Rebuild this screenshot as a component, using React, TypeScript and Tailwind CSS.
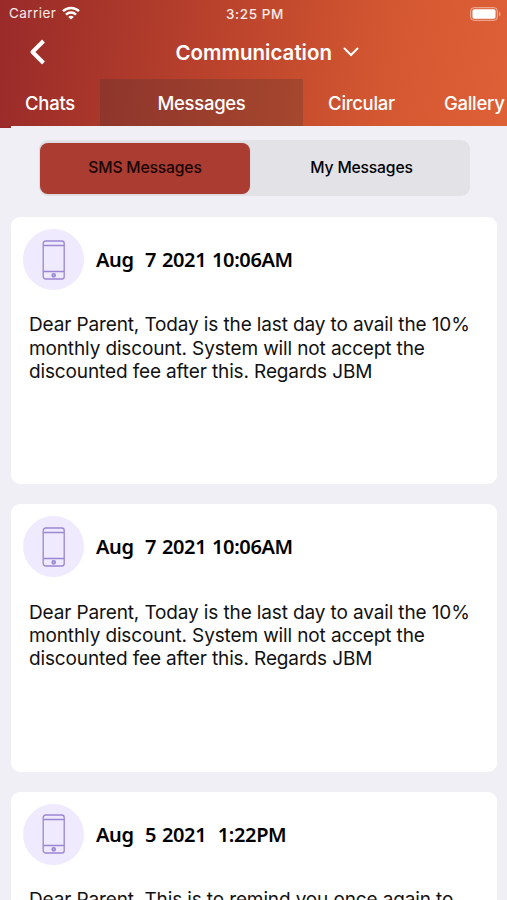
const messages = [
  {
    date: 'Aug  7 2021 10:06AM',
    lines: [
      'Dear Parent, Today is the last day to avail the 10%',
      'monthly discount. System will not accept the',
      'discounted fee after this. Regards JBM',
    ],
  },
  {
    date: 'Aug  7 2021 10:06AM',
    lines: [
      'Dear Parent, Today is the last day to avail the 10%',
      'monthly discount. System will not accept the',
      'discounted fee after this. Regards JBM',
    ],
  },
  {
    date: 'Aug  5 2021  1:22PM',
    lines: ['Dear Parent, This is to remind you once again to'],
  },
];

function StatusBar() {
  return (
    <div className="flex h-[27px] items-center pl-[9px] pr-[6px] text-[13.5px] text-white/90">
      <div className="flex flex-1 items-center gap-[6px]">
        <span className="tracking-[0.45px]">Carrier</span>
        <svg className="mb-px" width="18" height="14" viewBox="0 0 18 14" fill="none" stroke="white" strokeWidth="2.5">
          <path d="M1 5.1a11.6 11.6 0 0 1 16 0" />
          <path d="M4 8.6a7.2 7.2 0 0 1 10 0" />
          <path d="M9 13.6 6.2 10.9a4.2 4.2 0 0 1 5.6 0Z" fill="white" stroke="none" />
        </svg>
      </div>
      <span className="pt-px font-medium tracking-[0.6px]">3:25 PM</span>
      <div className="flex flex-1 justify-end">
        <svg width="31" height="14" viewBox="0 0 31 14">
          <rect x="0.5" y="0.5" width="27" height="13" rx="3.8" fill="white" fillOpacity="0.12" stroke="white" strokeOpacity="0.42" />
          <rect x="2.5" y="2.3" width="23" height="9.4" rx="2" fill="white" />
          <path d="M29 4.5q1.5 1 1.5 2.5T29 9.5Z" fill="white" fillOpacity="0.5" />
        </svg>
      </div>
    </div>
  );
}

function PhoneIcon() {
  return (
    <div className="flex size-[61px] items-center justify-center rounded-full bg-[#efeafd]">
      <svg width="24" height="40" viewBox="0 0 24 40" fill="none" stroke="#9a86d2" strokeWidth="1.3">
        <rect x="1.2" y="1" width="21" height="38" rx="2.6" />
        <path d="M1.2 5.5h21M1.2 31.5h21" />
        <circle cx="11.7" cy="35.3" r="1.7" fill="#b5a6e0" />
      </svg>
    </div>
  );
}

export default function App() {
  return (
    <div className="h-[900px] w-[507px] overflow-hidden bg-[#f0eff5] font-[Inter,'Liberation_Sans',sans-serif] text-black">
      <header className="h-[126px] bg-[linear-gradient(98deg,#992a29_0%,#ab382b_24%,#c0472d_50%,#d35731_75%,#de6037_100%)] text-white">
        <StatusBar />
        <div className="flex h-[52px] items-center pl-[28px]">
          <svg className="mb-[2px]" width="20" height="26" viewBox="0 0 20 26" fill="none" stroke="white" strokeWidth="4" strokeLinejoin="round">
            <path d="M15.5 2 4.5 13l11 11" />
          </svg>
          <h1 className="ml-[127.5px] w-[157px] text-[20.5px] font-semibold whitespace-nowrap">Communication</h1>
          <svg className="ml-[10.5px] mb-[2px]" width="16" height="10" viewBox="0 0 16 10" fill="none" stroke="white" strokeWidth="2" strokeLinecap="round">
            <path d="m1.5 1.5 6.5 6.5 6.5-6.5" />
          </svg>
        </div>
        <nav className="flex h-[47px] items-center text-[18.5px] font-medium tracking-[-0.3px] whitespace-nowrap">
          <span className="w-[100px] pt-[3px] text-center">Chats</span>
          <span className="flex h-full w-[203px] items-center justify-center bg-[#40322f]/25 pt-[3px]">Messages</span>
          <span className="w-[117px] pt-[3px] text-center">Circular</span>
          <span className="ml-[24px] pt-[3px]">Gallery</span>
        </nav>
      </header>
      <div className="h-[2px] w-[11px] bg-[#992a29]" />
      <main className="pr-[10px] pl-[11px] pt-[12px]">
        <div className="ml-[28px] flex h-[56px] w-[431px] items-center rounded-[9px] bg-[#e3e2e7] p-px text-[15.7px] font-medium tracking-[-0.18px]">
          <span className="flex h-[51px] w-[210px] items-center justify-center rounded-[8px] bg-[#aa3c31] text-[#170403] shadow-[0_0_2px_#8884]">SMS Messages</span>
          <span className="flex-1 pl-[4px] text-center">My Messages</span>
        </div>
        <div className="mt-[21px] flex flex-col gap-[20px]">
          {messages.map((message, index) => (
            <article key={index} className="h-[267.3px] rounded-[9px] bg-white pt-[12px] pl-[12px]">
              <div className="flex items-center gap-[12px]">
                <PhoneIcon />
                <h2 className="pt-px font-['Noto_Sans',sans-serif] text-[20px] font-semibold tracking-[-0.36px] whitespace-pre [word-spacing:0.9px]">{message.date}</h2>
              </div>
              <div className="mt-[23.3px] ml-[6px] text-[19px] leading-[23.4px] tracking-[-0.13px] whitespace-nowrap text-[#111]">
                {message.lines.map((line) => (
                  <p key={line}>{line}</p>
                ))}
              </div>
            </article>
          ))}
        </div>
      </main>
    </div>
  );
}
